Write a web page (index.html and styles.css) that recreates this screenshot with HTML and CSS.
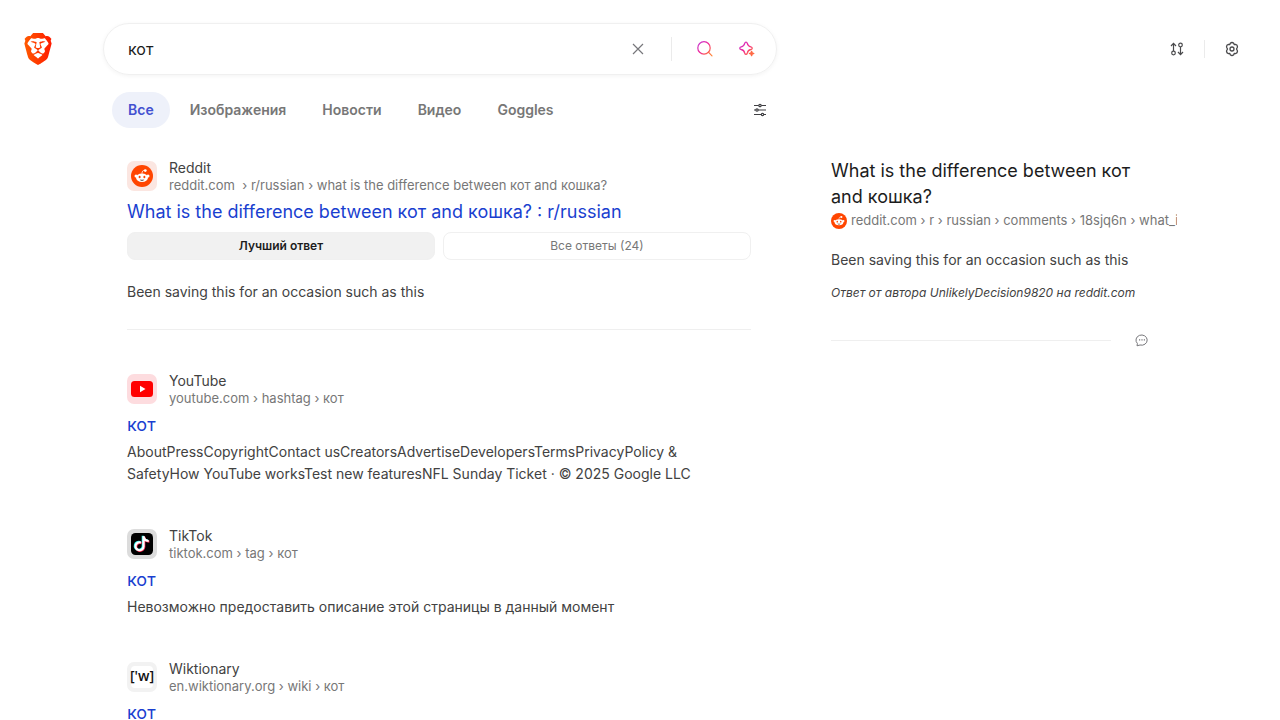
FILE: index.html
```html
<!DOCTYPE html>
<html lang="ru">
<head>
<meta charset="utf-8">
<meta name="viewport" content="width=device-width, initial-scale=1">
<title>кот - Brave Search</title>
<link rel="stylesheet" href="styles.css">
</head>
<body>
<svg class="defs" width="0" height="0" aria-hidden="true">
  <defs>
    <linearGradient id="lion" x1="0" y1="0" x2="1" y2="0"><stop offset="0" stop-color="#ff5a00"/><stop offset="1" stop-color="#ff1a00"/></linearGradient>
    <linearGradient id="ai" gradientUnits="userSpaceOnUse" x1="2" y1="2" x2="17" y2="17"><stop offset="0" stop-color="#b93fe0"/><stop offset=".45" stop-color="#f0259a"/><stop offset=".8" stop-color="#ff6a45"/><stop offset="1" stop-color="#ff8a35"/></linearGradient>
    <symbol id="reddit" viewBox="0 0 22 22">
      <circle cx="11" cy="11" r="11" fill="#ff4500"/>
      <circle cx="5" cy="11" r="1.500" fill="#fff"/><circle cx="17" cy="11" r="1.500" fill="#fff"/>
      <ellipse cx="11" cy="12.700" rx="6" ry="4.200" fill="#fff"/>
      <path d="M11 8.700c0-2.500.8-3.300 2.700-3.300" fill="none" stroke="#fff" stroke-width=".8"/>
      <circle cx="14.300" cy="5.600" r="1.400" fill="#fff"/>
      <ellipse cx="8.600" cy="12" rx="1" ry="1.200" fill="#ff4500"/><ellipse cx="13.400" cy="12" rx="1" ry="1.200" fill="#ff4500"/>
      <path d="M8.700 14.400q2.300.5 4.600 0-.7 1.400-2.300 1.400t-2.300-1.400z" fill="#40302a"/>
    </symbol>
  </defs>
</svg>

<header class="top">
  <a class="logo" href="#" aria-label="Brave Search">
    <svg width="28" height="32" viewBox="1.800 0 20.400 24">
      <path d="M5 4l7-1 7 1 2 4-3 9-6 4-6-4L3 8z" fill="#fff"/>
      <path fill="url(#lion)" d="M15.680 0l2.096 2.380s1.840-.512 2.709.358c.868.870 1.584 1.638 1.584 1.638l-.562 1.381.715 2.047s-2.104 7.980-2.350 8.955c-.486 1.919-.818 2.660-2.198 3.633-1.380.972-3.884 2.660-4.293 2.916-.409.256-.920.692-1.380.692-.460 0-.970-.436-1.380-.692a185.796 185.796 0 0 1-4.293-2.916c-1.380-.973-1.712-1.714-2.197-3.633-.247-.975-2.351-8.955-2.351-8.955l.715-2.047-.562-1.381s.716-.768 1.585-1.638c.868-.870 2.708-.358 2.708-.358L8.321 0h7.360zm-3.679 14.936c-.140 0-1.038.317-1.758.690-.720.373-1.242.637-1.409.742-.167.104-.065.301.087.409.152.107 2.194 1.690 2.393 1.866.198.175.489.464.687.464.198 0 .490-.290.688-.464.198-.175 2.240-1.759 2.392-1.866.152-.108.254-.305.087-.410-.167-.104-.689-.368-1.410-.741-.720-.373-1.617-.690-1.757-.690zm0-11.278s-.409.001-1.022.206-1.278.460-1.584.460c-.307 0-2.581-.434-2.581-.434S4.119 7.152 4.119 7.849c0 .697.339.881.680 1.243l2.020 2.149c.192.203.590.511.356 1.066-.235.555-.580 1.260-.196 1.977.384.716 1.042 1.194 1.464 1.115.421-.080 1.412-.598 1.776-.834.364-.237 1.518-1.190 1.518-1.554 0-.365-1.193-1.020-1.413-1.168-.220-.150-1.226-.725-1.247-.950-.020-.227-.012-.293.284-.851.297-.559.831-1.304.742-1.800-.089-.495-.950-.753-1.565-.986-.615-.232-1.799-.671-1.947-.740-.148-.068-.110-.133.339-.175.448-.043 1.719-.212 2.292-.052.573.160 1.552.403 1.632.532.079.130.149.134.067.579-.081.445-.500 2.581-.541 2.960-.040.380-.120.630.288.724.409.094 1.097.256 1.333.256s.924-.162 1.333-.256c.408-.093.329-.344.288-.723-.040-.380-.460-2.516-.541-2.961-.082-.445-.012-.450.067-.579.080-.129 1.059-.372 1.632-.532.573-.160 1.845.009 2.292.052.449.042.487.107.339.175-.148.069-1.332.508-1.947.740-.615.233-1.476.490-1.565.986-.090.496.445 1.241.742 1.800.297.558.304.624.284.850-.020.226-1.026.802-1.247.950-.220.150-1.413.804-1.413 1.169 0 .364 1.154 1.317 1.518 1.554.364.236 1.355.755 1.776.834.422.079 1.080-.400 1.464-1.115.384-.716.039-1.422-.195-1.977-.235-.555.163-.863.355-1.066l2.020-2.149c.341-.362.680-.546.680-1.243 0-.697-2.695-3.960-2.695-3.960s-2.274.436-2.580.436c-.307 0-.972-.256-1.585-.461-.613-.205-1.022-.206-1.022-.206z"/>
    </svg>
  </a>
  <form class="search" role="search" onsubmit="return false">
    <input class="query" type="text" value="кот" aria-label="Поиск">
    <button class="icon-btn clear" type="button" aria-label="Очистить"><svg width="20" height="20" viewBox="0 0 20 20" fill="none" stroke="#77777b" stroke-width="1.200"><path d="M5 5l10 10M15 5L5 15"/></svg></button>
    <span class="divider"></span>
    <button class="icon-btn find" type="submit" aria-label="Найти"><svg width="20" height="20" viewBox="0 0 20 20" fill="none" stroke="url(#ai)" stroke-width="1.200" stroke-linecap="round"><circle cx="9" cy="8.900" r="6.200"/><path d="M13.400 13.200l3.600 3.600"/></svg></button>
    <button class="icon-btn" type="button" aria-label="Ответить с ИИ"><svg width="20" height="20" viewBox="0 0 20 20" fill="none" stroke="url(#ai)" stroke-width="1.300" stroke-linejoin="round"><path d="M9 3.100c.9 0 1.100.500 1.300 1.300.5 2.200 1.300 3 3.500 3.500 1.900.500 1.900 2.100 0 2.600-2.200.500-3 1.300-3.500 3.500-.500 1.900-2.100 1.900-2.600 0-.500-2.200-1.300-3-3.500-3.500-1.900-.500-1.900-2.100 0-2.600 2.200-.500 3-1.300 3.500-3.500.2-.8.400-1.300 1.300-1.300z"/><path d="M14.600 12.300l.6 1.600 1.600.6-1.600.6-.6 1.600-.6-1.600-1.600-.6 1.600-.6z" fill="#ff6a45" stroke="#ff6a45"/></svg></button>
  </form>
  <div class="tools">
    <button class="icon-btn" type="button" aria-label="Вид"><svg width="16" height="16" viewBox="0 0 16 16" fill="none" stroke="#4a4a4c" stroke-width="1.200"><path d="M4.500 10V2.500M2 5l2.500-2.700L7 5M11.500 6v7.500M9 11l2.500 2.700L14 11"/><circle cx="4.500" cy="12" r="1.800"/><circle cx="11.500" cy="4" r="1.800"/></svg></button>
    <span class="divider short"></span>
    <button class="icon-btn" type="button" aria-label="Настройки"><svg width="16" height="16" viewBox="0 0 16 16" fill="none" stroke="#4a4a4c" stroke-width="1.300" stroke-linejoin="round"><path d="M6.300 2.300q1.700-1.500 3.400 0l.5 1.300 1.400-.2q2.100.5 1.800 2.800L12.500 8l.9 1.800q.3 2.300-1.800 2.800l-1.400-.2-.5 1.300q-1.700 1.500-3.400 0l-.5-1.300-1.400.2q-2.100-.5-1.800-2.800L3.500 8l-.9-1.800q-.3-2.300 1.800-2.800l1.400.2z"/><circle cx="8" cy="8" r="2"/></svg></button>
  </div>
</header>

<nav class="tabs" aria-label="Разделы">
  <a class="tab active" href="#">Все</a>
  <a class="tab" href="#">Изображения</a>
  <a class="tab" href="#">Новости</a>
  <a class="tab" href="#">Видео</a>
  <a class="tab" href="#">Goggles</a>
  <button class="icon-btn filter" type="button" aria-label="Фильтры"><svg width="16" height="16" viewBox="0 0 16 16" fill="none" stroke="#3f3f43" stroke-width="1.200"><path d="M2 3.500h4.700m2.600 0H14M2 8h1.700M6.300 8H14M2 12.500h7.200m2.600 0H14"/><circle cx="8" cy="3.500" r="1.200"/><circle cx="5" cy="8" r="1.200"/><circle cx="10.500" cy="12.500" r="1.200"/></svg></button>
</nav>

<div class="page">
  <main class="results">
    <article class="result">
      <div class="source">
        <span class="favicon f-reddit"><svg width="22" height="22"><use href="#reddit"/></svg></span>
        <div><div class="site">Reddit</div><div class="url">reddit.com &nbsp;› r/russian › what is the difference between кот and кошка?</div></div>
      </div>
      <h2 class="title"><a href="#">What is the difference between кот and кошка? : r/russian</a></h2>
      <div class="switch">
        <button class="choice on" type="button">Лучший ответ</button>
        <button class="choice" type="button">Все ответы (24)</button>
      </div>
      <p class="answer">Been saving this for an occasion such as this</p>
    </article>
    <article class="result">
      <div class="source">
        <span class="favicon f-youtube"><svg width="22" height="22" viewBox="0 0 22 22"><rect y="3" width="22" height="16" rx="3.500" fill="#f00"/><path d="M9 7.800l5.500 3.200L9 14.200z" fill="#fff"/></svg></span>
        <div><div class="site">YouTube</div><div class="url">youtube.com › hashtag › кот</div></div>
      </div>
      <h2 class="title"><a href="#">кот</a></h2>
      <p class="text">AboutPressCopyrightContact usCreatorsAdvertiseDevelopersTermsPrivacyPolicy &amp; SafetyHow YouTube worksTest new featuresNFL Sunday Ticket · © 2025 Google LLC</p>
    </article>
    <article class="result">
      <div class="source">
        <span class="favicon f-tiktok"><svg width="22" height="22" viewBox="0 0 22 22" fill="none" stroke-width="2.200"><rect width="22" height="22" rx="4.500" fill="#000"/><path d="M9.900 9.500a4 4 0 1 0 2.600 4V3.200c.3 2.800 2 4.600 5.200 4.800" stroke="#25f4ee" transform="translate(-.7 -.4)"/><path d="M9.900 9.500a4 4 0 1 0 2.600 4V3.200c.3 2.800 2 4.600 5.200 4.800" stroke="#fe2c55" transform="translate(.7 .6)"/><path d="M9.900 9.500a4 4 0 1 0 2.600 4V3.200c.3 2.800 2 4.600 5.200 4.800" stroke="#fff"/></svg></span>
        <div><div class="site">TikTok</div><div class="url">tiktok.com › tag › кот</div></div>
      </div>
      <h2 class="title"><a href="#">кот</a></h2>
      <p class="text">Невозможно предоставить описание этой страницы в данный момент</p>
    </article>
    <article class="result">
      <div class="source">
        <span class="favicon f-wikt"><span class="wikt">['w]</span></span>
        <div><div class="site">Wiktionary</div><div class="url">en.wiktionary.org › wiki › кот</div></div>
      </div>
      <h2 class="title"><a href="#">кот</a></h2>
    </article>
  </main>

  <aside class="side">
    <h2 class="side-title">What is the difference between кот and кошка?</h2>
    <div class="side-url"><svg width="16" height="16"><use href="#reddit"/></svg><span>reddit.com › r › russian › comments › 18sjq6n › what_is_the_difference</span></div>
    <p class="side-text">Been saving this for an occasion such as this</p>
    <p class="side-author">Ответ от автора UnlikelyDecision9820 на reddit.com</p>
    <div class="side-foot">
      <hr class="rule">
      <button class="icon-btn" type="button" aria-label="Отзыв"><svg width="14" height="14" viewBox="0 0 14 14" fill="none" stroke="#77777b"><path d="M2.400 10.500A5.600 5.100 0 1 1 5 12l-3 .8z" stroke-linejoin="round"/><path d="M4 6.900h1.200M6.400 6.900h1.200M8.800 6.900H10" stroke-width="1.200"/></svg></button>
    </div>
  </aside>
</div>
</body>
</html>
```
FILE: styles.css
```css
* { box-sizing: border-box; }
html { overflow: hidden; }
body { margin: 0; height: 100vh; overflow: hidden; background: #fff; color: #424242; font: 14px/22px Inter, "Noto Sans", sans-serif; }
h2, p { margin: 0; font-weight: 400; }
a { text-decoration: none; color: inherit; }
button { font: inherit; padding: 0; margin: 0; cursor: pointer; }
svg { display: block; flex: none; }
.defs { position: absolute; }
.icon-btn { border: 0; background: none; display: flex; flex: none; }

.top { display: flex; align-items: center; padding: 23px 40px 0 24px; }
.logo { width: 79px; flex: none; }
.search { flex: 0 1 674px; min-width: 0; height: 52px; display: flex; align-items: center; padding: 0 19px 0 24px; border: 1px solid #f0f0f0; border-radius: 26px; box-shadow: 0 1px 4px rgba(0, 0, 0, .05); }
.query { flex: 1; min-width: 0; border: 0; outline: 0; padding: 0; background: none; color: #1c1c1c; font: 16px/24px Inter, "Noto Sans", sans-serif; }
.clear { margin-right: 23px; }
.divider { width: 1px; height: 24px; background: #ebebeb; }
.find { margin: 0 22px 0 23px; }
.short { height: 18px; }
.tools { margin-left: auto; display: flex; align-items: center; gap: 19px; }

.tabs { display: flex; align-items: center; gap: 4px; max-width: 768px; padding: 17px 0 0 112px; }
.tab { padding: 7px 16px; border-radius: 18px; font-weight: 600; color: #777; }
.active { background: #eef1fa; color: #4350d0; }
.filter { margin-left: auto; }

.page { display: flex; gap: 80px; padding: 30px 24px 0 127px; }
.results { flex: 0 1 624px; min-width: 0; }
.result { margin-bottom: 41px; }
.result:first-child { padding-bottom: 26px; border-bottom: 1px solid #efefef; }
.source { display: flex; align-items: center; gap: 12px; }
.favicon { width: 30px; height: 30px; flex: none; border-radius: 7px; display: flex; align-items: center; justify-content: center; }
.f-reddit { background: #fbe6e1; }
.f-youtube { background: #fddcdf; }
.f-tiktok { background: #dcdcdc; }
.f-wikt { background: #f2f2f2; }
.wikt { width: 22px; height: 22px; border-radius: 4px; background: #fff; color: #111; font: 600 14px/20px "Open Sans", sans-serif; display: flex; justify-content: center; }
.site { line-height: 20px; }
.url { padding-bottom: 2px; font-size: 13px; line-height: 14px; color: #777; }
.title { margin-top: 5px; font-size: 18px; line-height: 26px; color: #1a3fd0; }
.text { margin-top: 3px; }
.switch { display: grid; grid-template-columns: 1fr 1fr; gap: 8px; margin-top: 7px; }
.choice { height: 28px; border: 1px solid #f0f0f0; border-radius: 8px; background: #fff; font-size: 12px; color: #777; }
.on { background: #f1f1f1; color: #1c1c1c; font-weight: 600; }
.answer { margin-top: 21px; }

.side { flex: 0 1 346px; min-width: 0; }
.side-title { padding-right: 24px; font-size: 18px; line-height: 26px; color: #1c1c1c; }
.side-url { display: flex; align-items: flex-end; gap: 4px; height: 19px; font-size: 13px; line-height: 18px; color: #777; white-space: nowrap; overflow: hidden; }
.side-text { margin-top: 20px; }
.side-author { margin-top: 12px; font-size: 12px; line-height: 20px; font-style: italic; }
.side-foot { display: flex; align-items: center; gap: 24px; margin-top: 30px; }
.rule { flex: 0 1 280px; height: 1px; margin: 0; border: 0; background: #efefef; }
```
